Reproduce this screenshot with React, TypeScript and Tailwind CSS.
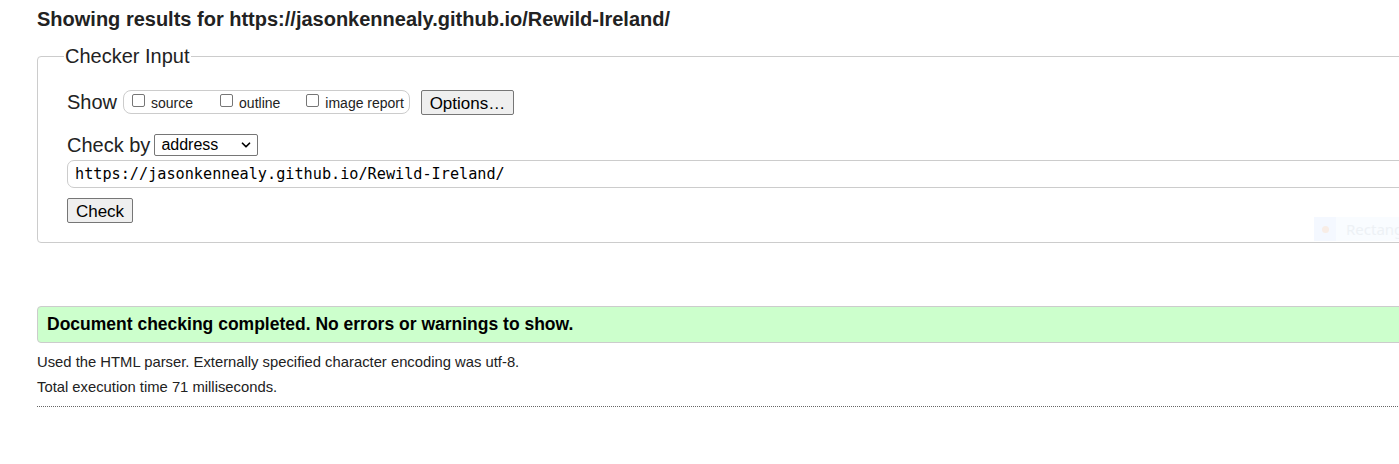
import { ChevronDown } from 'lucide-react';

export default function App() {
  return (
    <div className="w-[1399px] h-[464px] overflow-hidden bg-white font-['Liberation_Sans',Arial,sans-serif] text-[#222]">
      <div className="relative w-[1500px] pl-[37px] pt-[8px]">
        {/* Result heading */}
        <h2 className="text-[20px] font-bold leading-[23px] text-[#222]">
          Showing results for https://jasonkennealy.github.io/Rewild-Ireland/
        </h2>

        {/* Checker Input fieldset */}
        <fieldset className="mt-[14px] border border-[#ccc] rounded-l-[4px] pl-[29px] pr-4 pb-[19px] pt-0 h-[198px]">
          <legend className="text-[20px] leading-[23px] px-[1px] -ml-[3px] text-[#222]">Checker Input</legend>

          <div className="flex items-center mt-[21px] h-[26px]">
            <span className="text-[20px] text-[#222]">Show</span>
            <div className="ml-[6px] flex items-center h-[24px] border border-[#ccc] rounded-[8px] pl-[8px] pr-[5px] text-[14px]">
              <label className="flex items-center">
                <span className="w-[13px] h-[13px] border border-[#767676] rounded-[2px] bg-white -mt-[4px]" />
                <span className="ml-[6px] mt-[2px]">source</span>
              </label>
              <label className="flex items-center ml-[27px]">
                <span className="w-[13px] h-[13px] border border-[#767676] rounded-[2px] bg-white -mt-[4px]" />
                <span className="ml-[6px] mt-[2px]">outline</span>
              </label>
              <label className="flex items-center ml-[26px]">
                <span className="w-[13px] h-[13px] border border-[#767676] rounded-[2px] bg-white -mt-[4px]" />
                <span className="ml-[6px] mt-[2px]">image report</span>
              </label>
            </div>
            <button className="ml-[11px] h-[25px] w-[93px] border border-[#767676] rounded-[2px] bg-[#efefef] text-[17px] text-black">
              Options…
            </button>
          </div>

          <div className="flex items-center mt-[19px] h-[22px]">
            <span className="text-[20px] text-[#222]">Check by</span>
            <div className="ml-[4px] flex items-center justify-between h-[22px] w-[104px] border border-[#767676] rounded-[2px] pl-[6px] pr-[4px] text-[16px] text-black">
              <span>address</span>
              <ChevronDown className="w-[14px] h-[14px]" strokeWidth={3} />
            </div>
          </div>

          <div className="mt-[4px] h-[28px] border border-[#ccc] rounded-l-[7px] flex items-center pl-[7px] font-['DejaVu_Sans_Mono',monospace] text-[15.2px] text-black w-[1420px]">
            https://jasonkennealy.github.io/Rewild-Ireland/
          </div>

          <button className="mt-[10px] h-[25px] w-[66px] border border-[#767676] rounded-[2px] bg-[#efefef] text-[17px] text-black">
            Check
          </button>
        </fieldset>

        {/* faint overlay */}
        <div className="absolute left-[1314px] top-[217px] h-[24px] w-[110px] flex items-center bg-[#f7fbff] opacity-70">
          <div className="w-[22px] h-full flex items-center justify-center bg-[#f0f6ff]">
            <span className="w-[7px] h-[7px] rounded-full bg-[#f6e6dc]" />
          </div>
          <span className="ml-[10px] text-[15px] font-['Noto_Sans',sans-serif] text-[#e6ecf2]">Rectangle</span>
        </div>

        {/* success message */}
        <div className="mt-[63px] h-[37px] border border-[#ccc] rounded-l-[4px] bg-[#ccffcc] flex items-center pl-[9px]">
          <p className="text-[17.5px] font-bold text-black">Document checking completed. No errors or warnings to show.</p>
        </div>

        <p className="mt-[11px] text-[14.8px] leading-[17px] text-[#222]">
          Used the HTML parser. Externally specified character encoding was utf-8.
        </p>
        <p className="mt-[8px] text-[14.8px] leading-[17px] text-[#222]">Total execution time 71 milliseconds.</p>

        <div className="mt-[10px] border-t border-dotted border-[#666]" />
      </div>
    </div>
  );
}
